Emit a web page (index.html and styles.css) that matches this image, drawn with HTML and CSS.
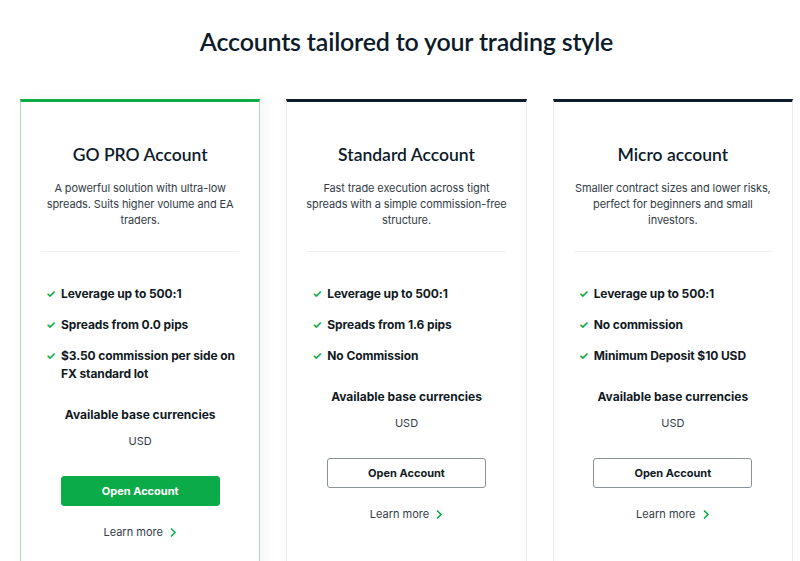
FILE: index.html
```html
<!DOCTYPE html>
<html lang="en">
<head>
  <meta charset="UTF-8">
  <title>Accounts</title>
  <link rel="stylesheet" href="styles.css">
</head>
<body>
  <section class="accounts">
    <h2 class="accounts-title">Accounts tailored to your trading style</h2>
    <div class="cards">
      <div class="card featured">
        <h3>GO PRO Account</h3>
        <p class="desc">A powerful solution with ultra-low spreads. Suits higher volume and EA traders.</p>
        <hr>
        <ul class="features">
          <li><span class="tick">✓</span>Leverage up to 500:1</li>
          <li><span class="tick">✓</span>Spreads from 0.0 pips</li>
          <li><span class="tick">✓</span>$3.50 commission per side on FX standard lot</li>
        </ul>
        <div class="base">Available base currencies</div>
        <div class="cur">USD</div>
        <a class="btn btn-green" href="#">Open Account</a>
        <a class="more" href="#">Learn more <svg width="8" height="11" viewBox="0 0 8 11"><path d="M2 1.5l4 4-4 4" fill="none" stroke="#0bab48" stroke-width="1.6"/></svg></a>
      </div>
      <div class="card">
        <h3>Standard Account</h3>
        <p class="desc">Fast trade execution across tight spreads with a simple commission-free structure.</p>
        <hr>
        <ul class="features">
          <li><span class="tick">✓</span>Leverage up to 500:1</li>
          <li><span class="tick">✓</span>Spreads from 1.6 pips</li>
          <li><span class="tick">✓</span>No Commission</li>
        </ul>
        <div class="base">Available base currencies</div>
        <div class="cur">USD</div>
        <a class="btn" href="#">Open Account</a>
        <a class="more" href="#">Learn more <svg width="8" height="11" viewBox="0 0 8 11"><path d="M2 1.5l4 4-4 4" fill="none" stroke="#0bab48" stroke-width="1.6"/></svg></a>
      </div>
      <div class="card">
        <h3>Micro account</h3>
        <p class="desc">Smaller contract sizes and lower risks, perfect for beginners and small investors.</p>
        <hr>
        <ul class="features">
          <li><span class="tick">✓</span>Leverage up to 500:1</li>
          <li><span class="tick">✓</span>No commission</li>
          <li><span class="tick">✓</span>Minimum Deposit $10 USD</li>
        </ul>
        <div class="base">Available base currencies</div>
        <div class="cur">USD</div>
        <a class="btn" href="#">Open Account</a>
        <a class="more" href="#">Learn more <svg width="8" height="11" viewBox="0 0 8 11"><path d="M2 1.5l4 4-4 4" fill="none" stroke="#0bab48" stroke-width="1.6"/></svg></a>
      </div>
    </div>
  </section>
</body>
</html>
```

FILE: styles.css
```css
body { margin: 0; font-family: Inter, "Liberation Sans", sans-serif; color: #111a24; background: #fff; overflow: hidden; }
.accounts { width: 773px; margin-left: 20px; padding-top: 26px; }
.accounts-title { margin: 0 0 43px; text-align: center; font-size: 25px; font-weight: 600; letter-spacing: -0.2px; color: #0d1b2a; font-family: Lato, Inter, sans-serif; line-height: 30px; }
.cards { display: flex; gap: 26px; height: 520px; }
.card { flex: 1; border: 1px solid #ebedf0; border-top: 3px solid #0d1b2a; padding: 40px 20px 20px; display: flex; flex-direction: column; align-items: center; text-align: center; }
.card.featured { border-color: #a6e3bb; border-top-color: #0bab48; box-shadow: 4px 0 14px rgba(0,0,0,0.05); }
.card h3 { margin: 0; font-size: 17.5px; font-weight: 600; line-height: 26px; font-family: Lato, Inter, sans-serif; color: #0d1b2a; }
.desc { margin: 12px -3px 0; font-size: 11px; line-height: 16px; letter-spacing: -0.1px; color: #333c47; }
.card hr { width: 100%; border: 0; border-top: 1px solid #eef0f4; margin: 23px 0 0; }
.features { list-style: none; margin: 33px 0 0; padding: 0 0 0 5px; text-align: left; align-self: stretch; }
.features li { font-size: 12px; font-weight: 700; line-height: 18px; letter-spacing: -0.1px; display: flex; margin-bottom: 13px; color: #111a24; }
.tick { color: #0bab48; width: 15px; flex: none; font-size: 11px; font-weight: 700; }
.base { margin-top: 10px; font-size: 12px; font-weight: 700; line-height: 18px; }
.cur { margin-top: 9px; font-size: 11px; line-height: 16px; color: #333c47; }
.btn { margin-top: 27px; width: 159px; height: 30px; box-sizing: border-box; border: 1px solid #8a9199; border-radius: 3px; display: flex; align-items: center; justify-content: center; font-size: 11px; font-weight: 700; color: #111a24; text-decoration: none; }
.btn-green { background: #0bab48; border-color: #0bab48; color: #fff; }
.more { margin-top: 18px; font-size: 11px; line-height: 16px; color: #333c47; text-decoration: none; display: flex; align-items: center; gap: 6px; }
```
